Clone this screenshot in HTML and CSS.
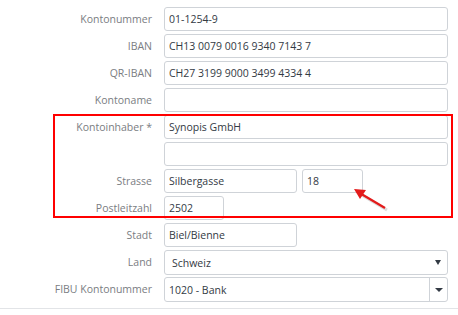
FILE: index.html
```html
<!DOCTYPE html>
<html>
    <head>
        <title>Konto</title>
        <link rel="stylesheet" href="styles.css">
    </head>
    <body>
        <form class="konto-form">
            <label class="lbl">Kontonummer</label>
            <div class="field"><input class="inp" type="text" value="01-1254-9"></div>

            <label class="lbl">IBAN</label>
            <div class="field"><input class="inp" type="text" value="CH13 0079 0016 9340 7143 7"></div>

            <label class="lbl">QR-IBAN</label>
            <div class="field"><input class="inp" type="text" value="CH27 3199 9000 3499 4334 4"></div>

            <label class="lbl">Kontoname</label>
            <div class="field"><input class="inp" type="text" value=""></div>

            <label class="lbl">Kontoinhaber *</label>
            <div class="field"><input class="inp" type="text" value="Synopis GmbH"></div>

            <label class="lbl"></label>
            <div class="field"><input class="inp" type="text" value=""></div>

            <label class="lbl">Strasse</label>
            <div class="field split">
                <input class="inp street" type="text" value="Silbergasse">
                <input class="inp nr" type="text" value="18">
            </div>

            <label class="lbl">Postleitzahl</label>
            <div class="field"><input class="inp plz" type="text" value="2502"></div>

            <label class="lbl">Stadt</label>
            <div class="field"><input class="inp street" type="text" value="Biel/Bienne"></div>

            <label class="lbl">Land</label>
            <div class="field">
                <div class="sel">
                    <span class="sel-text land">Schweiz</span>
                    <span class="caret small"></span>
                </div>
            </div>

            <label class="lbl">FIBU Kontonummer</label>
            <div class="field">
                <div class="sel">
                    <span class="sel-text">1020 - Bank</span>
                    <span class="sel-btn"><span class="caret"></span></span>
                </div>
            </div>
        </form>
        <div class="footer-line"></div>

        <!-- annotation -->
        <div class="mark"></div>
        <svg class="arrow" width="40" height="30" viewBox="0 0 40 30">
            <line x1="35" y1="23" x2="8" y2="7" stroke="#999" stroke-width="3" opacity="0.35"/>
            <line x1="33" y1="21" x2="6" y2="5" stroke="#e31b1b" stroke-width="2.2"/>
            <polygon points="2,2 14,3 8,12" fill="#e31b1b"/>
        </svg>
    </body>
</html>
```

FILE: styles.css
```css
body {
    margin: 0;
    padding: 0;
    background-color: #ffffff;
    font-family: "Open Sans", Arial, sans-serif;
    font-size: 10.5px;
    position: relative;
    width: 458px;
    height: 315px;
    overflow: hidden;
}

.konto-form {
    display: grid;
    grid-template-columns: 152px 284px;
    column-gap: 12px;
    row-gap: 3px;
    grid-auto-rows: 24px;
    padding-top: 7px;
}

.lbl {
    text-align: right;
    color: #7a7d82;
    line-height: 24px;
    white-space: nowrap;
}

.field {
    display: flex;
    gap: 5px;
}

.inp {
    box-sizing: border-box;
    height: 24px;
    width: 100%;
    border: 1px solid #cfd3d8;
    border-radius: 3px;
    padding: 0 4px;
    font-family: "Open Sans", Arial, sans-serif;
    font-size: 10.5px;
    color: #333a44;
    background: #ffffff;
}

.street {
    width: 133px;
}

.nr {
    width: 61px;
}

.plz {
    width: 60px;
}

.sel {
    box-sizing: border-box;
    height: 25px;
    width: 100%;
    border: 1px solid #cfd3d8;
    border-radius: 3px;
    display: flex;
    align-items: center;
    font-size: 10.5px;
    color: #333a44;
}

.sel-text {
    flex: 1;
    padding-left: 4px;
}

.sel-text.land {
    padding-left: 7px;
}

.sel-btn {
    width: 17px;
    height: 100%;
    border-left: 1px solid #cfd3d8;
    display: flex;
    align-items: center;
    justify-content: center;
}

.caret {
    width: 0;
    height: 0;
    border-left: 4px solid transparent;
    border-right: 4px solid transparent;
    border-top: 4px solid #333a44;
}

.caret.small {
    border-left-width: 3px;
    border-right-width: 3px;
    border-top-width: 5px;
    margin-right: 6px;
}

.footer-line {
    margin-top: 7px;
    height: 1px;
    background-color: #e2e4e7;
}

.mark {
    position: absolute;
    left: 53px;
    top: 114px;
    width: 400px;
    height: 104px;
    box-sizing: border-box;
    border: 2px solid #ff0000;
}

.arrow {
    position: absolute;
    left: 352px;
    top: 187px;
}
```
